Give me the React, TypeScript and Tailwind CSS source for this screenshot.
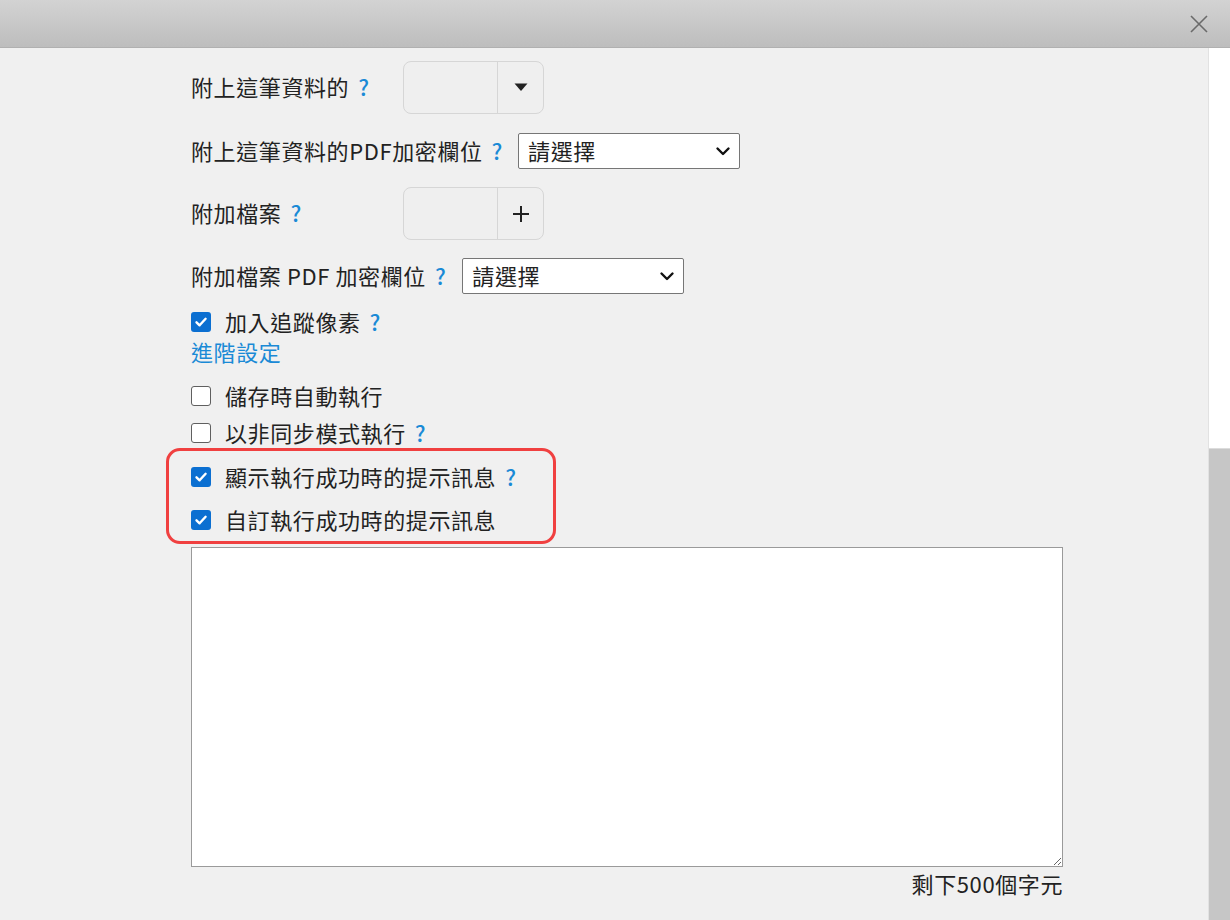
import React from 'react';

const Help = () => <span className="ml-[9px] font-medium text-[#1a8ad6]">?</span>;

function Check({ checked }: { checked?: boolean }) {
  return checked ? (
    <span className="flex h-[20px] w-[20px] shrink-0 items-center justify-center rounded-[3px] bg-[#0b6fd1]">
      <svg width="14" height="14" viewBox="0 0 14 14" fill="none">
        <path d="M2.5 7.3 5.6 10.3 11.6 3.8" stroke="white" strokeWidth="2.4" strokeLinecap="round" strokeLinejoin="round" />
      </svg>
    </span>
  ) : (
    <span className="h-[20px] w-[20px] shrink-0 rounded-[3px] border-[1.5px] border-[#5f5f5f] bg-white" />
  );
}

function CheckRow({ label, checked, help, className }: { label: string; checked?: boolean; help?: boolean; className?: string }) {
  return (
    <div className={`flex h-[30px] items-center ${className ?? ''}`}>
      <Check checked={checked} />
      <span className="ml-[14px] pb-[3px]">{label}</span>
      {help && <span className="pb-[3px]"><Help /></span>}
    </div>
  );
}

function FakeSelect() {
  return (
    <div className="flex h-[36px] w-[222px] items-center justify-between rounded-[2px] border border-[#767676] bg-white pl-[9px] pr-[8px]">
      <span className="pb-[2px]">請選擇</span>
      <svg width="16" height="16" viewBox="0 0 16 16" fill="none">
        <path d="M2.5 5.5 8 11 13.5 5.5" stroke="#111" strokeWidth="2.4" strokeLinecap="round" strokeLinejoin="round" />
      </svg>
    </div>
  );
}

function InputGroup({ icon }: { icon: 'caret' | 'plus' }) {
  return (
    <div className="flex h-[53px] w-[141px] overflow-hidden rounded-[8px] border border-[#d6d6d6] bg-[#efefef]">
      <div className="w-[94px] border-r border-[#d6d6d6]" />
      <div className="flex flex-1 items-center justify-center">
        {icon === 'caret' ? (
          <svg width="14" height="9" viewBox="0 0 14 9">
            <path d="M0.5 0.5h13L7 8z" fill="#222" />
          </svg>
        ) : (
          <svg width="18" height="18" viewBox="0 0 18 18">
            <path d="M9 1v16M1 9h16" stroke="#222" strokeWidth="2" />
          </svg>
        )}
      </div>
    </div>
  );
}

export default function App() {
  return (
    <div className="flex h-[920px] w-[1230px] flex-col overflow-hidden bg-[#f0f0f0] font-['Noto_Sans_CJK_TC',sans-serif] text-[22px] leading-none tracking-[0.6px] text-[#222]">
      <div className="flex h-[48px] shrink-0 items-center justify-end border-b border-[#b0b0b0] bg-gradient-to-b from-[#d3d3d3] to-[#bdbdbd] pr-[22px]">
        <svg width="18" height="18" viewBox="0 0 18 18">
          <path d="M1 1l16 16M17 1 1 17" stroke="#6a6a6a" strokeWidth="1.6" />
        </svg>
      </div>

      <div className="flex flex-1">
        <div className="flex-1 pl-[191px] pt-[13px]">
          <div className="flex h-[53px] items-center">
            <div className="flex w-[212px] items-center pb-[3px]">
              附上這筆資料的
              <Help />
            </div>
            <InputGroup icon="caret" />
          </div>

          <div className="mt-[19px] flex h-[36px] items-center">
            <span className="pb-[3px]">附上這筆資料的PDF加密欄位</span>
            <span className="pb-[3px]"><Help /></span>
            <div className="ml-[15px]">
              <FakeSelect />
            </div>
          </div>

          <div className="mt-[18px] flex h-[53px] items-center">
            <div className="flex w-[212px] items-center pb-[3px]">
              附加檔案
              <Help />
            </div>
            <InputGroup icon="plus" />
          </div>

          <div className="mt-[18px] flex h-[36px] items-center">
            <span className="pb-[3px]">附加檔案 PDF 加密欄位</span>
            <span className="pb-[3px]"><Help /></span>
            <div className="ml-[16px]">
              <FakeSelect />
            </div>
          </div>

          <CheckRow className="mt-[13px]" label="加入追蹤像素" checked help />
          <div className="flex h-[30px] items-center pb-[3px] text-[#1a8ad6]">進階設定</div>

          <CheckRow className="mt-[14px]" label="儲存時自動執行" />
          <CheckRow className="mt-[7px]" label="以非同步模式執行" help />

          <div className="ml-[-25px] w-[390px] rounded-[14px] border-[3px] border-[#f04040] pb-[6px] pl-[22px] pt-[11px]">
            <CheckRow label="顯示執行成功時的提示訊息" checked help />
            <CheckRow className="mt-[13px]" label="自訂執行成功時的提示訊息" checked />
          </div>

          <div className="mt-[3px] w-[872px]">
            <textarea className="block h-[320px] w-full border border-[#9a9a9a] bg-white p-2 outline-none" />
            <div className="mt-[5px] text-right">剩下500個字元</div>
          </div>
        </div>

        <div className="flex w-[22px] shrink-0 flex-col border-l border-[#e2e2e2] bg-white">
          <div className="h-[400px]" />
          <div className="flex-1 border-t border-[#dcdcdc] bg-[#c6c6c6]" />
        </div>
      </div>
    </div>
  );
}
